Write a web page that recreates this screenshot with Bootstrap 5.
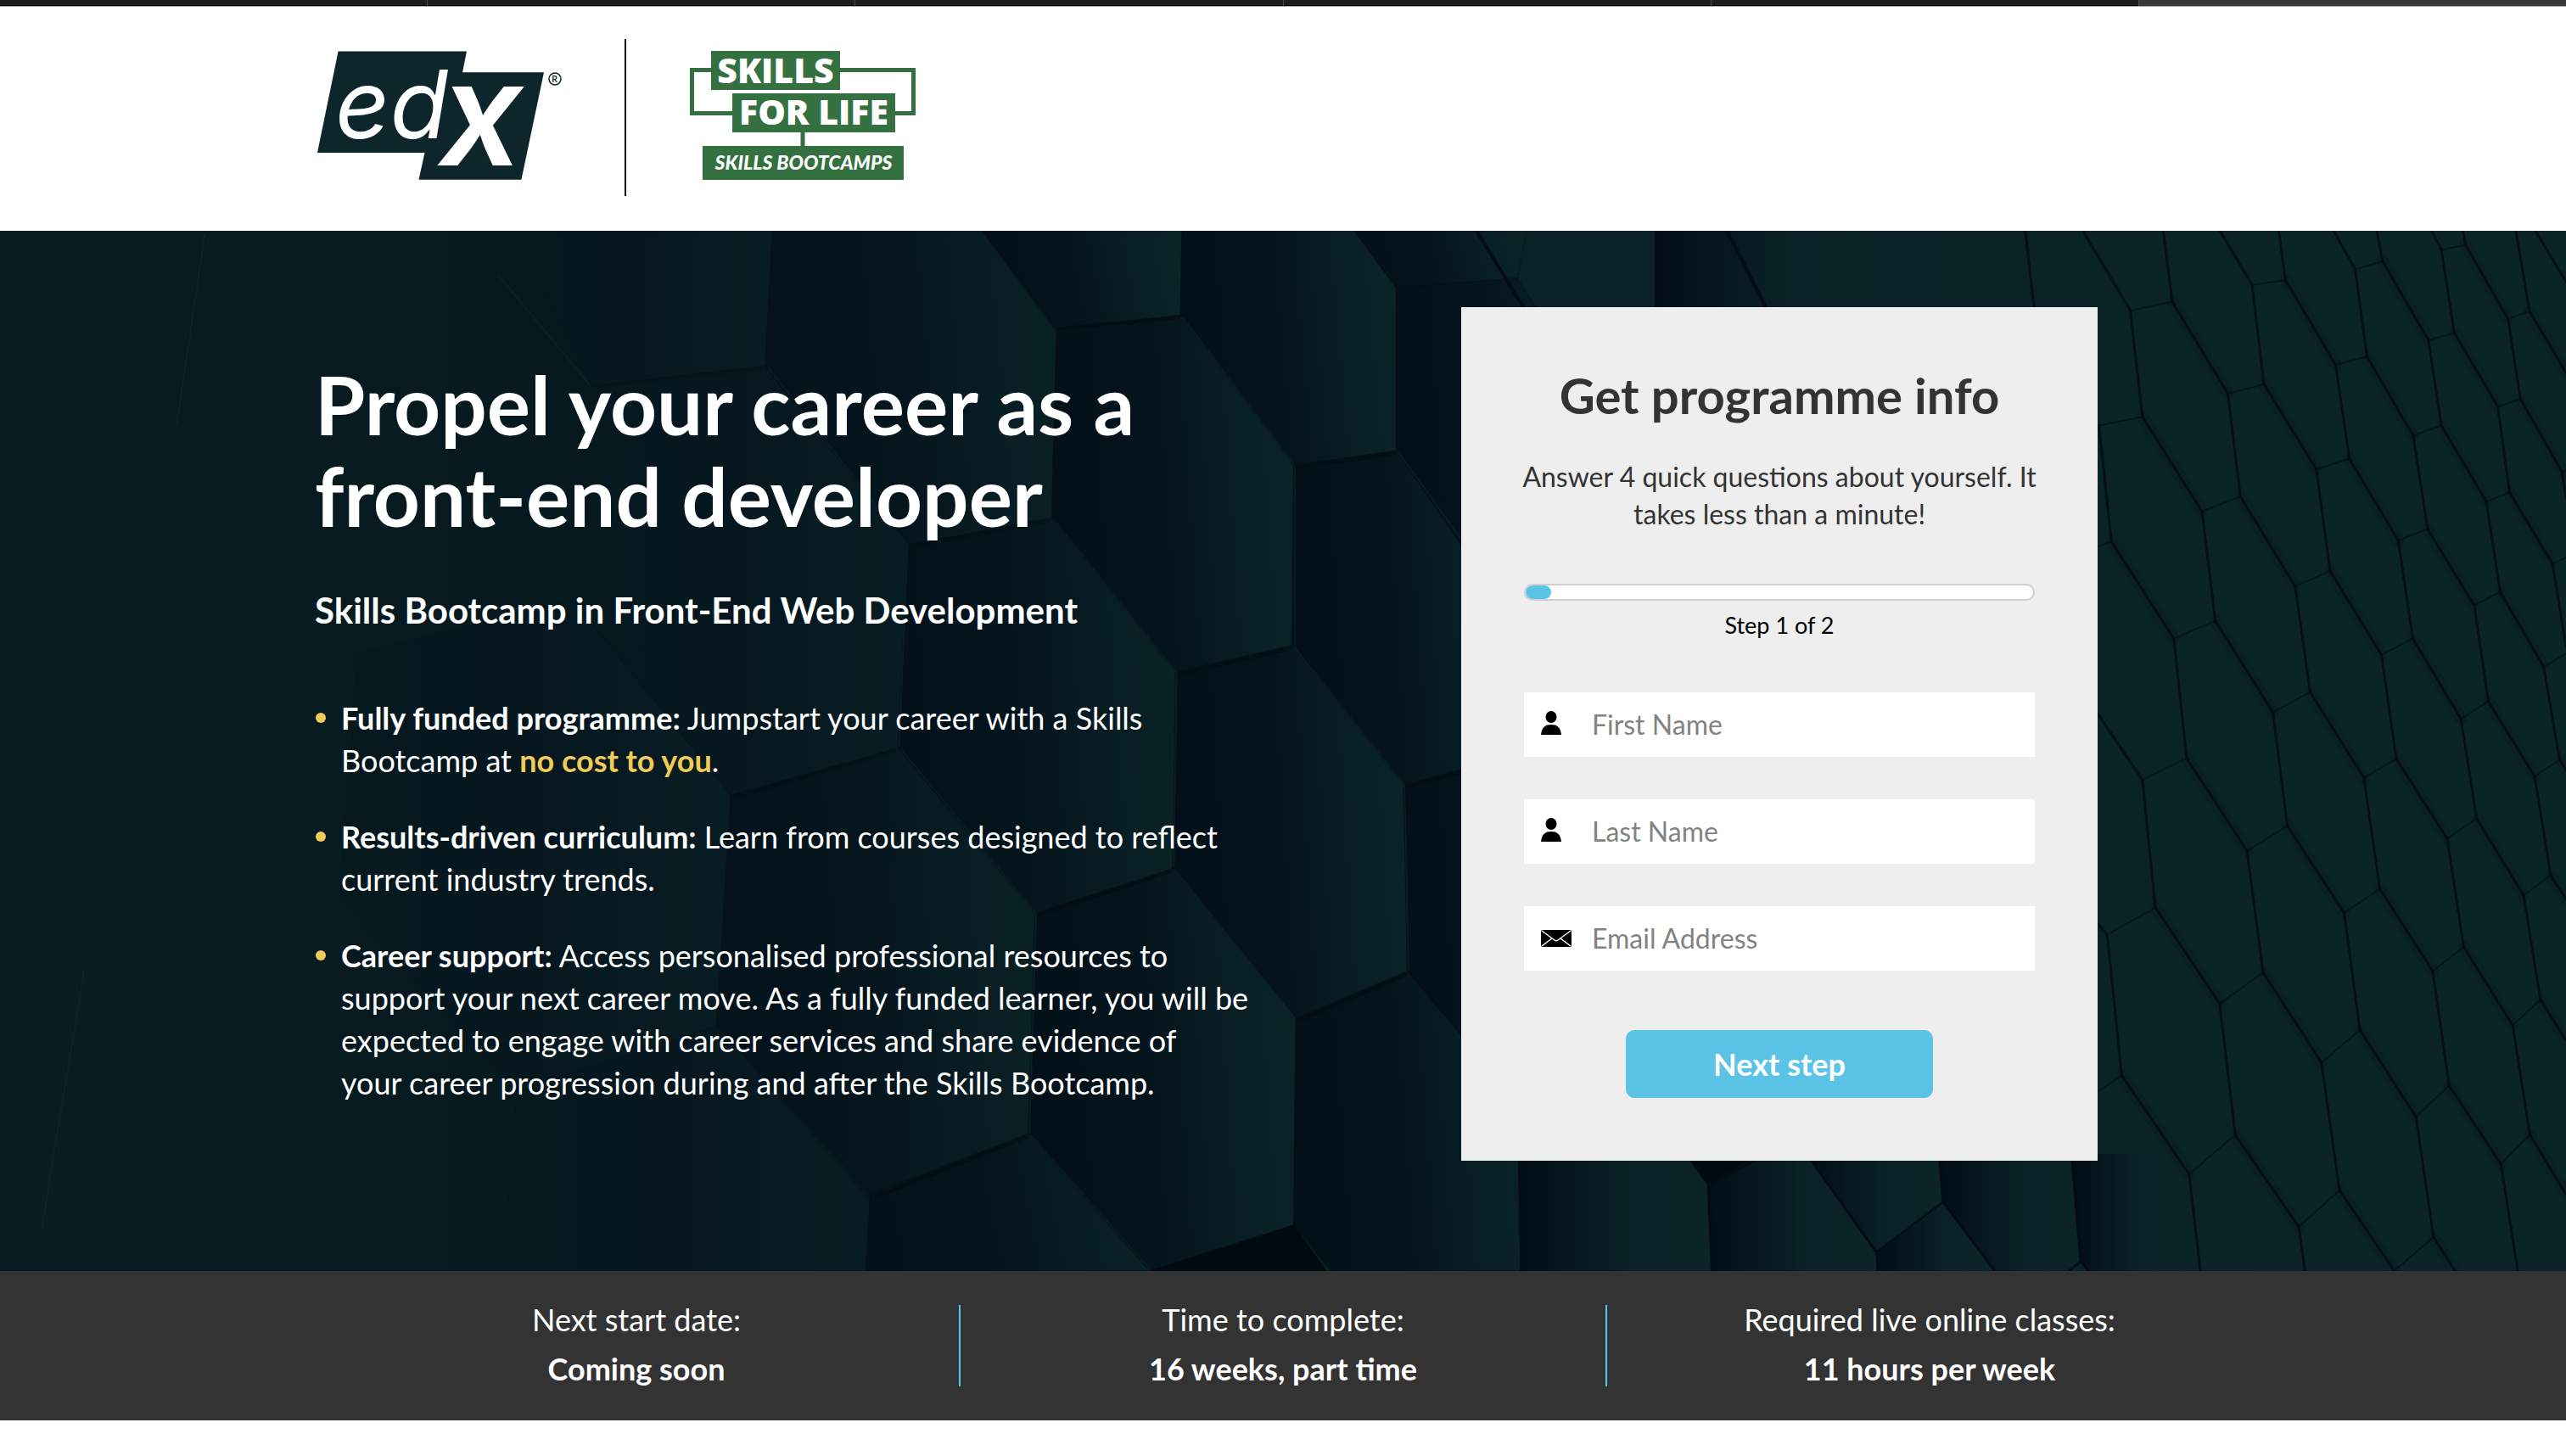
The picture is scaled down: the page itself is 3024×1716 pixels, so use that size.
<!DOCTYPE html>
<html lang="en-GB">
<head>
<meta charset="utf-8">
<meta name="viewport" content="width=device-width, initial-scale=1">
<title>Skills Bootcamp in Front-End Web Development</title>
<link rel="stylesheet" href="https://cdn.jsdelivr.net/npm/bootstrap@5.3.0/dist/css/bootstrap.min.css">
<style>
body{font-family:Lato,"Open Sans",sans-serif;color:#333;background:#fff}
.page-wrap{max-width:2284px;margin-inline:auto}
.tab-strip{height:8px;background:#1e1e1e;border-bottom:1px solid #aaa;box-shadow:inset 0 -1px #000}
.tab-strip span{border-left:1px solid #4a4a4a}
.tab-strip span:first-child{border-left:0}
.tab-strip .tab-current{background:#383838}
.brand-bar{height:264px;padding-top:38px}
.brand-rule{width:2px;height:185px;background:#000;margin:0 75px 0 74px}
.brand-link{margin-top:14px}
.edx-logo{width:288px;height:152px;overflow:visible}
.skills-logo{width:266px;height:152px;overflow:visible}
.hero{background:#071a20;color:#fff;padding:90px 0 129px}
.hero-art{inset:0;width:100%;height:100%}
.hero-copy{max-width:1110px;padding:60px 0 0 1px}
.hero h1{font-size:96px;line-height:108px;font-weight:700;margin:0 0 55px}
.hero h2{font-size:42px;line-height:52px;font-weight:700;margin:0 0 76px}
.perks{font-size:36px;line-height:50px;margin:0;padding:0;list-style:none}
.perks li{position:relative;padding-left:31px;margin-bottom:40px}
.perks li::before{content:"";position:absolute;left:1px;top:19px;width:12px;height:12px;border-radius:50%;background:#f0cb56}
.gold{color:#f0cb56}
.form-wrap{margin-right:182px}
.lead-form{width:750px;max-width:100%;background:#eee;color:#333;padding:70px 74px 74px}
.lead-form h3{font-size:58px;line-height:68px;font-weight:700;margin:0 0 40px}
.form-intro{font-size:32px;line-height:44px;margin:0 -16px 60px}
.step-bar{--bs-progress-height:20px;--bs-progress-bg:#fff;--bs-progress-bar-bg:#5bc4e6;--bs-progress-border-radius:10px;border:2px solid #d0cece}
.step-bar .progress-bar{border-radius:10px}
.step-text{font-size:27px;line-height:34px;color:#000;margin:12px 0 62px}
.field-box{background:#fff;height:76px;margin-bottom:50px}
.field-icon{width:80px;padding-left:20px}
.field-box .form-control{font-size:32px;padding:0;border:0;border-radius:0;background:transparent;box-shadow:none}
.field-box .form-control::placeholder{color:#828282;opacity:1}
.next-btn{--bs-btn-bg:#5bc4e6;--bs-btn-color:#fff;--bs-btn-border-color:#5bc4e6;--bs-btn-hover-bg:#43b4d9;--bs-btn-hover-color:#fff;--bs-btn-border-radius:10px;--bs-btn-font-size:36px;width:362px;height:80px;font-weight:700;margin-top:20px;padding:0}
.hero{padding-bottom:130px}
.facts{background:#333;color:#fff;padding:40px 0;font-size:36px;line-height:58px}
.facts .fact{height:96px;margin:0}
.facts .fact p{margin:0}
.facts .fact-lines{margin-top:-12px}
.facts .fact+.fact{border-left:2px solid #5bc4e6}
</style>
<script src="https://cdn.jsdelivr.net/npm/bootstrap@5.3.0/dist/js/bootstrap.bundle.min.js"></script>
</head>
<body>
<div class="tab-strip d-flex" aria-hidden="true"><span class="flex-fill"></span><span class="flex-fill"></span><span class="flex-fill"></span><span class="flex-fill"></span><span class="flex-fill"></span><span class="flex-fill tab-current"></span></div>

<header class="brand-bar">
  <div class="page-wrap d-flex align-items-start">
    <a href="#" class="brand-link ms-1" aria-label="edX home">
      <svg class="edx-logo d-block" viewBox="375 60 288 152">
        <path fill="#0d262b" d="M399.600 60.500H551L546 85.300H642L615.400 211.700H494.500L501.500 180H375Z"/>
        <text x="396" y="163" font-family="Inter" font-style="italic" font-weight="400" font-size="112" fill="#fff">ed</text>
        <text x="520" y="195" font-family="Inter" font-style="italic" font-weight="600" font-size="170" fill="#fff">x</text>
        <circle cx="655" cy="93" r="7" fill="none" stroke="#0d262b" stroke-width="1.500"/>
        <text x="651" y="97" font-family="Open Sans" font-weight="600" font-size="11" fill="#0d262b">R</text>
      </svg>
    </a>
    <div class="brand-rule"></div>
    <a href="#" class="brand-link" aria-label="Skills for Life">
      <svg class="skills-logo d-block" viewBox="813 60 266 152">
        <g fill="none" stroke="#357040" stroke-width="5"><path d="M838 82.500H815.500V133.500H864M990 82.500H1076.500V133.500H1055M946 155V173"/></g>
        <path fill="#357040" d="M838 60H990V106H838ZM863 110H1055V156H863ZM828 172H1065V212H828Z"/>
        <g font-family="Open Sans" font-weight="800" fill="#fff" text-anchor="middle">
          <text x="914" y="98" font-size="41">SKILLS</text>
          <text x="959" y="147" font-size="41">FOR LIFE</text>
          <text x="947" y="200" font-family="Lato" font-weight="900" font-style="italic" font-size="23">SKILLS BOOTCAMPS</text>
        </g>
      </svg>
    </a>
  </div>
</header>

<main>
<section class="hero position-relative">
  <svg class="hero-art position-absolute" viewBox="0 272 3024 1226" preserveAspectRatio="xMidYMid slice" aria-hidden="true">
    <defs>
      <linearGradient id="base" x1="0" x2="1"><stop offset="0" stop-color="#081c21"/><stop offset=".3" stop-color="#06181f"/><stop offset=".5" stop-color="#071b21"/><stop offset=".6" stop-color="#0a2227"/><stop offset="1" stop-color="#0b2428"/></linearGradient>
      <linearGradient id="cell" x1="0" x2="1" y1=".3" y2=".2"><stop offset="0" stop-color="#03101a"/><stop offset=".45" stop-color="#04141d"/><stop offset=".8" stop-color="#092026"/><stop offset="1" stop-color="#0b2428"/></linearGradient>
      <linearGradient id="dim" x1="0" x2="1"><stop offset="0" stop-color="#06191f"/><stop offset=".5" stop-color="#06171f"/><stop offset="1" stop-color="#081d23"/></linearGradient>
      <linearGradient id="edge" x1="0" x2="1"><stop offset="0" stop-color="#020d17"/><stop offset=".6" stop-color="#0a2227"/><stop offset="1" stop-color="#0b2428"/></linearGradient>
    </defs>
    <path fill="url(#base)" d="M0 272H3024V1498H0Z"/>
    <g transform="translate(0 260) scale(1.097 .797)" stroke="#020c12" stroke-width="1.500" stroke-opacity=".3">
      <g fill="url(#dim)" stroke-opacity=".1">
        <path d="M550 15H830L822 215L635 245Z"/>
        <path d="M635 245L822 215L975 480L965 780L785 850L615 560Z"/>
        <path d="M385 640L615 560L785 850L770 1190L555 1290L365 1000Z"/>
        <path d="M555 1290L770 1190L935 1450L930 1553H540Z"/>
      </g>
      <g fill="url(#cell)">
        <path opacity=".7" d="M830 15H1055L1135 165L1130 440L975 480L822 215Z"/>
        <path d="M1055 15H1270L1268 140L1135 160Z"/>
        <path d="M1270 15H1455L1500 100V340L1390 362L1268 140Z"/>
        <path d="M1455 15H1640L1630 85L1500 100Z"/>
        <path d="M1135 160L1268 140L1390 362L1388 628L1263 668L1130 440Z"/>
        <path d="M1500 100L1630 85L1720 280L1720 520L1610 560L1500 340Z"/>
        <path opacity=".8" d="M975 480L1130 440L1263 668L1260 958L1112 1025L965 780Z"/>
        <path d="M1390 362L1500 340L1610 560L1625 790L1508 835L1388 628Z"/>
        <path d="M1263 668L1388 628L1508 835L1512 1110L1392 1180L1260 958Z"/>
        <path opacity=".7" d="M785 850L965 780L1112 1025L1105 1350L935 1440L770 1190Z"/>
        <path d="M1508 835L1625 790L1740 1000V1260L1640 1320L1512 1110Z"/>
        <path d="M1112 1025L1260 958L1392 1180L1390 1485L1235 1553L1105 1350Z"/>
        <path opacity=".8" d="M935 1440L1105 1350L1235 1553H930Z"/>
        <path d="M1392 1180L1512 1110L1640 1320L1636 1553H1430L1390 1485Z"/>
      </g>
      <path fill="#010a10" stroke="none" d="M1235 1553L1390 1485L1425 1553Z"/>
      <g fill="none" stroke="#010a10" stroke-opacity=".5" stroke-width="5"><path d="M1136 160L1268 143M1392 364L1500 344M1264 672L1388 632M1114 1028L1258 962M1510 838L1625 794M1394 1184L1512 1114M940 1444L1104 1354"/><path stroke-opacity=".25" d="M640 246L820 218M980 482L1128 444M790 852L962 784"/></g>
      <g fill="none" stroke="#123037" stroke-opacity=".45" stroke-width="1.500"><path d="M1270 142L1391 362V628M1132 442L1264 668L1261 956M968 782L1113 1025L1106 1350M1502 342L1590 510M1262 960L1392 1180M1390 630L1509 835L1513 1108M1107 1352L1235 1550M825 217L975 480L966 778M220 20L190 300M90 1110L45 1490M635 245L535 80"/></g>
    </g>
    <!-- cells that show above the form -->
    <path fill="url(#edge)" d="M1952 272H2195L2215 400H1953Z"/>
    <path fill="none" stroke="#020c16" stroke-width="4" d="M1740 272L1800 370M1952 272V370M2035 272L2085 370"/>
    <!-- cells that show below the form -->
    <g transform="translate(1600 1360) scale(.574 .333)">
      <g fill="url(#edge)">
        <path d="M330 0H660L720 110L728 414H335Z"/>
        <path d="M720 110L830 0H920L1065 350L1068 414H728Z"/>
        <path d="M925 0H1195L1202 170L1068 345Z"/>
        <path d="M1195 0H1465L1484 375L1450 414H1310L1202 170Z"/>
        <path d="M1068 350L1202 180L1305 414H1070Z"/>
        <path d="M1467 0H1640L1700 414H1500L1484 375Z"/>
      </g>
      <path fill="#010a12" d="M675 0H830L720 108Z"/>
      <path fill="none" stroke="#020c16" stroke-width="6" d="M332 0L336 414M675 0L720 108L728 414M725 105L830 10M922 0L1066 350L1068 414M1068 345L1202 170M1195 0L1202 170L1308 414M1466 0L1485 380L1500 414M1485 380L1460 414"/>
    </g>
    <g transform="translate(2300 260) scale(.4617 .797)" fill="none" stroke="#020c17" stroke-linejoin="round" stroke-linecap="round">
      <path vector-effect="non-scaling-stroke" stroke-width="2" stroke-opacity=".6" d="M456 133L563 120M767 95L852 88M1030 72L1100 60M1250 43L1312 36M376 303L487 290M705 256L797 242M980 213L1060 201M1217 177L1283 166M1420 145L1475 134M374 482L408 475M639 430L737 408M931 368L1015 352M1178 318L1250 303M1394 275L1452 264M567 618L673 592M877 541L966 518M1140 473L1215 456M1365 416L1424 402M1558 372L1568 370M487 827L600 795M820 727L915 697M1097 642L1177 618M1334 569L1400 549M1534 508L1568 498M397 1056L520 1016M754 932L857 895M1052 824L1135 796M1300 737L1370 711M1511 660L1568 640M374 1288L434 1264M684 1158L795 1112M1002 1024L1093 988M1265 914L1340 884M1488 822L1552 797M606 1410L724 1352M944 1245L1042 1197M1228 1110L1307 1074M1460 998L1529 968M886 1488L990 1434M1185 1325L1270 1279M1432 1190L1503 1152M1402 1395L1476 1352M1130 1553L1230 1503"/>
      <!-- soft shade along the long edges -->
      <path vector-effect="non-scaling-stroke" stroke-width="14" stroke-opacity=".16" d="M563 120L705 256M852 88L980 213M1100 60L1217 177M1312 36L1420 145M487 290L639 430M797 242L931 368M1060 201L1178 318M1283 166L1394 275M1475 134L1568 225M408 475L567 618M737 408L877 541M1015 352L1140 473M1250 303L1365 416M1452 264L1558 372M673 592L820 727M966 518L1097 642M1215 456L1334 569M1424 402L1534 508M600 795L754 932M915 697L1052 824M1177 618L1300 737M1400 549L1511 660M520 1016L684 1158M857 895L1002 1024M1135 796L1265 914M1370 711L1488 822M434 1264L606 1410M795 1112L944 1245M1093 988L1228 1110M1340 884L1460 998M1552 797L1568 812M724 1352L886 1488M1042 1197L1185 1325M1307 1074L1432 1190M1529 968L1568 1003M990 1434L1130 1553M1270 1279L1402 1395M1503 1152L1568 1212M1230 1503L1285 1553M1476 1352L1568 1440"/>
      <path vector-effect="non-scaling-stroke" stroke-width="3" stroke-opacity=".85" d="M563 120L705 256M852 88L980 213M1100 60L1217 177M1312 36L1420 145M487 290L639 430M797 242L931 368M1060 201L1178 318M1283 166L1394 275M1475 134L1568 225M408 475L567 618M737 408L877 541M1015 352L1140 473M1250 303L1365 416M1452 264L1558 372M673 592L820 727M966 518L1097 642M1215 456L1334 569M1424 402L1534 508M600 795L754 932M915 697L1052 824M1177 618L1300 737M1400 549L1511 660M520 1016L684 1158M857 895L1002 1024M1135 796L1265 914M1370 711L1488 822M434 1264L606 1410M795 1112L944 1245M1093 988L1228 1110M1340 884L1460 998M1552 797L1568 812M724 1352L886 1488M1042 1197L1185 1325M1307 1074L1432 1190M1529 968L1568 1003M990 1434L1130 1553M1270 1279L1402 1395M1503 1152L1568 1212M1230 1503L1285 1553M1476 1352L1568 1440M374 730L487 827M374 1040L397 1056M335 15L456 133M685 15L767 95M975 15L1030 72M1225 15L1250 43M1490 15L1568 90"/>
      <path vector-effect="non-scaling-stroke" stroke-width="3" stroke-opacity=".85" d="M188 15L210 128M540 15L563 120M835 15L852 88M1085 15L1100 60M1305 15L1312 36M456 133L487 290M767 95L797 242M1030 72L1060 201M1250 43L1283 166M1440 15L1475 134M376 303L408 475M705 256L737 408M980 213L1015 352M1217 177L1250 303M1420 145L1452 264M639 430L673 592M931 368L966 518M1178 318L1215 456M1394 275L1424 402M567 618L600 795M877 541L915 697M1140 473L1177 618M1365 416L1400 549M1558 372L1568 410M487 827L520 1016M820 727L857 895M1097 642L1135 796M1334 569L1370 711M1534 508L1568 630M397 1056L434 1264M754 932L795 1112M1052 824L1093 988M1300 737L1340 884M1511 660L1552 797M684 1158L724 1352M1002 1024L1042 1197M1265 914L1307 1074M1488 822L1529 968M606 1410L635 1553M944 1245L990 1434M1228 1110L1270 1279M1460 998L1503 1152M886 1488L902 1553M1185 1325L1230 1503M1432 1190L1476 1352M1402 1395L1445 1553"/>
    </g>
  </svg>
  <div class="page-wrap position-relative d-flex flex-wrap justify-content-between align-items-start">
    <div class="hero-copy">
      <h1>Propel your career as a<br>front-end developer</h1>
      <h2>Skills Bootcamp in Front-End Web Development</h2>
      <ul class="perks">
        <li><strong>Fully funded programme:</strong> Jumpstart your career with a Skills<br>Bootcamp at <strong class="gold">no cost to you</strong>.</li>
        <li><strong>Results-driven curriculum:</strong> Learn from courses designed to reflect<br>current industry trends.</li>
        <li><strong>Career support:</strong> Access personalised professional resources to<br>support your next career move. As a fully funded learner, you will be<br>expected to engage with career services and share evidence of<br>your career progression during and after the Skills Bootcamp.</li>
      </ul>
    </div>
    <div class="form-wrap">
      <form class="lead-form text-center">
        <h3>Get programme info</h3>
        <p class="form-intro">Answer 4 quick questions about yourself. It<br>takes less than a minute!</p>
        <div class="progress step-bar" role="progressbar" aria-label="Form progress" aria-valuenow="5" aria-valuemin="0" aria-valuemax="100"><div class="progress-bar" style="width:5%"></div></div>
        <p class="step-text">Step 1 of 2</p>
        <div class="field-box d-flex align-items-center">
          <label class="field-icon flex-shrink-0 text-start" for="first" aria-label="First Name"><svg class="d-block" width="24" height="32" viewBox="0 0 24 32"><ellipse cx="12" cy="7" rx="6.500" ry="7"/><path d="M0 28C1 19 5 16 12 16S23 19 24 28Z"/></svg></label>
          <input class="form-control" id="first" type="text" placeholder="First Name">
        </div>
        <div class="field-box d-flex align-items-center">
          <label class="field-icon flex-shrink-0 text-start" for="last" aria-label="Last Name"><svg class="d-block" width="24" height="32" viewBox="0 0 24 32"><ellipse cx="12" cy="7" rx="6.500" ry="7"/><path d="M0 28C1 19 5 16 12 16S23 19 24 28Z"/></svg></label>
          <input class="form-control" id="last" type="text" placeholder="Last Name">
        </div>
        <div class="field-box d-flex align-items-center">
          <label class="field-icon flex-shrink-0 text-start" for="email" aria-label="Email Address"><svg class="d-block" width="36" height="20" viewBox="0 0 36 20"><rect width="36" height="20" rx="2"/><path d="M1 1L16 12Q18 13.500 20 12L35 1M1 19L13 10M35 19L23 10" fill="none" stroke="#fff" stroke-width="1.500"/></svg></label>
          <input class="form-control" id="email" type="email" placeholder="Email Address">
        </div>
        <button type="button" class="btn next-btn">Next step</button>
      </form>
    </div>
  </div>
</section>

<section class="facts text-center">
  <div class="page-wrap row g-0">
    <div class="col fact"><div class="fact-lines"><p>Next start date:</p><p class="fw-bold">Coming soon</p></div></div>
    <div class="col fact"><div class="fact-lines"><p>Time to complete:</p><p class="fw-bold">16 weeks, part time</p></div></div>
    <div class="col fact"><div class="fact-lines"><p>Required live online classes:</p><p class="fw-bold">11 hours per week</p></div></div>
  </div>
</section>
</main>
</body>
</html>
